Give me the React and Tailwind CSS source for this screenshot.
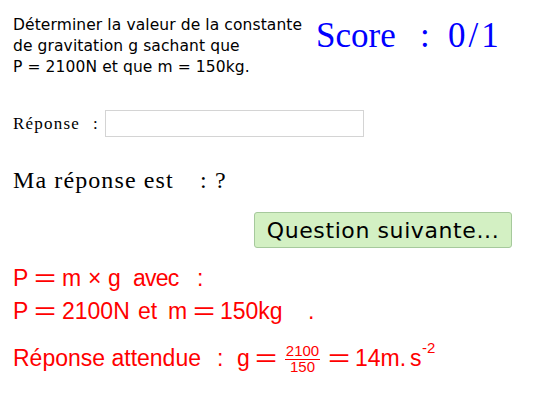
const sans = { fontFamily: '"Liberation Sans", Arial, sans-serif' };
const serif = { fontFamily: '"Liberation Serif", "Times New Roman", serif' };
const dejavu = { fontFamily: '"DejaVu Sans", sans-serif' };

function Eq() {
  return <span className="inline-block scale-x-[1.65] origin-left">=</span>;
}

export default function App() {
  return (
    <div className="w-[534px] h-[409px] bg-white overflow-hidden text-black">
      <div className="flex pt-[15px] pl-[13px]">
        <div className="w-[303px] text-[15.5px] leading-[21px] tracking-[0.1px]" style={dejavu}>
          <div>Déterminer la valeur de la constante</div>
          <div>de gravitation g sachant que</div>
          <div>P = 2100N et que m = 150kg.</div>
        </div>
        <div className="mt-[1px] flex text-[35px] leading-[40px] text-[#0000ff]" style={serif}>
          <span className="w-[104px]">Score</span>
          <span className="w-[28px]">:</span>
          <span className="tracking-[3px]">0/1</span>
        </div>
      </div>

      <div className="flex items-center pl-[13px] mt-[32px] h-[27px]">
        <span className="w-[80px] text-[17px] tracking-[1.2px]" style={serif}>Réponse</span>
        <span className="w-[12px] text-[17px]" style={serif}>:</span>
        <div className="w-[259px] h-[27px] border border-[#d4d4d4] bg-white" />
      </div>

      <div className="flex pl-[13px] mt-[28px] text-[24px] leading-[30px]" style={serif}>
        <span className="w-[187px] tracking-[1.1px]">Ma réponse est</span>
        <span className="w-[15px]">:</span>
        <span>?</span>
      </div>

      <div className="flex pl-[254px] mt-[17px]">
        <div className="w-[258px] h-[36px] bg-[#d3f0c3] border border-[#a6c99c] rounded-[3px] flex items-center justify-center text-[22px] tracking-[0.6px]" style={dejavu}>
          Question suivante...
        </div>
      </div>

      <div className="pl-[13px] mt-[14px] text-[#ff0000] text-[23px] leading-[33px]" style={sans}>
        <div className="flex">
          <span className="w-[21px]">P</span>
          <span className="w-[28px]"><Eq /></span>
          <span className="w-[26px]">m</span>
          <span className="w-[20px]">×</span>
          <span className="w-[25px]">g</span>
          <span className="w-[64px] tracking-[-0.8px]">avec</span>
          <span>:</span>
        </div>
        <div className="flex">
          <span className="w-[21px]">P</span>
          <span className="w-[28px]"><Eq /></span>
          <span className="w-[76px]">2100N</span>
          <span className="w-[30px]">et</span>
          <span className="w-[25px]">m</span>
          <span className="w-[27px]"><Eq /></span>
          <span className="w-[88px]">150kg</span>
          <span>.</span>
        </div>
        <div className="flex items-start mt-[14px]">
          <span className="w-[204px]">Réponse attendue</span>
          <span className="w-[20px]">:</span>
          <span className="w-[18px]">g</span>
          <span className="w-[30px]"><Eq /></span>
          <span className="w-[43px] flex">
            <span className="w-[35px] mt-[2px] flex flex-col items-center text-[15px] leading-[14px]">
              <span>2100</span>
              <span className="mt-[1px] w-full h-px bg-[#ff0000]" />
              <span>150</span>
            </span>
          </span>
          <span className="w-[27px]"><Eq /></span>
          <span className="w-[55px]">14m.</span>
          <span className="w-[12px]">s</span>
          <span className="text-[15px] leading-[14px] -mt-px">-2</span>
        </div>
      </div>
    </div>
  );
}
